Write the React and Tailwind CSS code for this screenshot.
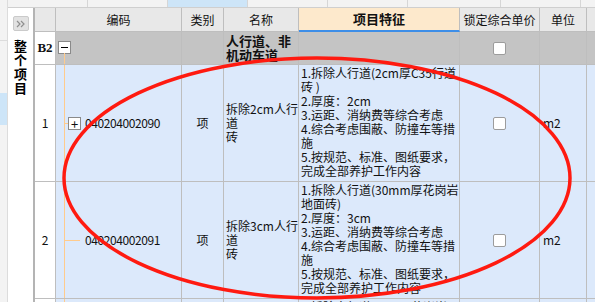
const B = 'border-[#bebebe]'
const BLUE = 'bg-[#dce9fb]'

const rows = [
  {
    n: '1',
    code: '040204002090',
    plus: true,
    name: ['拆除2cm人行', '道', '砖'],
    feat: [
      '1.拆除人行道(2cm厚C35行道',
      '砖 )',
      '2.厚度：2cm',
      '3.运距、消纳费等综合考虑',
      '4.综合考虑围蔽、防撞车等措',
      '施',
      '5.按规范、标准、图纸要求，',
      '完成全部养护工作内容',
    ],
  },
  {
    n: '2',
    code: '040204002091',
    plus: false,
    name: ['拆除3cm人行', '道', '砖'],
    feat: [
      '1.拆除人行道(30mm厚花岗岩',
      '地面砖)',
      '2.厚度：3cm',
      '3.运距、消纳费等综合考虑',
      '4.综合考虑围蔽、防撞车等措',
      '施',
      '5.按规范、标准、图纸要求，',
      '完成全部养护工作内容',
    ],
  },
]

function Check() {
  return <div className="w-[13px] h-[13px] bg-white border border-[#9c9c9c] rounded-[2px]" />
}

function Head({ children, className = '' }) {
  return (
    <div className={`border-r border-b ${B} bg-[#e8e8e8] flex items-center justify-center ${className}`}>
      {children}
    </div>
  )
}

function Row({ r }) {
  const cell = `border-r border-b ${B} ${BLUE}`
  return (
    <>
      <div className={`border-r border-b ${B} bg-white flex items-center justify-center`}>{r.n}</div>
      <div className={`${cell} relative flex items-center`}>
        {/* tree connector */}
        <div className="absolute left-[8px] top-0 bottom-0 w-px bg-[#ffcb8c]" />
        <div className={`absolute left-[8px] top-1/2 h-px bg-[#ffcb8c] ${r.plus ? 'w-[4px]' : 'w-[16px]'}`} />
        <div className="w-[12px] shrink-0" />
        {r.plus ? (
          <div className="relative w-[13px] h-[13px] bg-white border border-[#8a8a8a] flex items-center justify-center text-[13px] leading-none">
            +
          </div>
        ) : (
          <div className="w-[13px] shrink-0" />
        )}
        <span className="ml-[4px] tracking-[-0.4px]">{r.code}</span>
      </div>
      <div className={`${cell} flex items-center justify-center`}>项</div>
      <div className={`${cell} flex items-center pl-[2px] leading-[14px]`}>
        <div>
          {r.name.map((t, i) => (
            <div key={i}>{t}</div>
          ))}
        </div>
      </div>
      <div className={`${cell} pl-[2px] pt-[1px] leading-[14px] whitespace-nowrap overflow-hidden`}>
        {r.feat.map((t, i) => (
          <div key={i}>{t}</div>
        ))}
      </div>
      <div className={`${cell} flex items-center justify-center`}>
        <Check />
      </div>
      <div className={`${cell} flex items-center pl-[3px]`}>m2</div>
      <div className={`border-b ${B} ${BLUE}`} />
    </>
  )
}

export default function App() {
  return (
    <div className="relative w-[595px] h-[302px] overflow-hidden flex bg-white text-[12px] text-[#111] font-['Noto_Sans_CJK_SC',sans-serif]">
      {/* left strip */}
      <div className="w-[8px] shrink-0 bg-[#f3f3f3] border-r border-[#dcdcdc] flex flex-col">
        <div className="h-[41px] border-b border-[#dcdcdc]" />
        <div className="h-[52px]" />
        <div className="h-[32px] bg-[#cde5f8]" />
      </div>

      <div className="flex-1 flex flex-col">
        {/* top strip */}
        <div className="h-[8px] shrink-0 flex bg-[#f3f3f3] border-b border-[#cfcfcf]">
          <div className="w-[80px] border-r border-[#d6d6d6]" />
          <div className="w-[80px] border-r border-[#d6d6d6]" />
          <div className="w-[80px] border-r border-[#d6d6d6] bg-[#cde5f8]" />
          <div className="w-[80px] border-r border-[#d6d6d6]" />
          <div className="w-[80px] border-r border-[#d6d6d6]" />
          <div className="w-[93px] border-r border-[#d6d6d6]" />
          <div className="w-[80px] border-r border-[#d6d6d6]" />
          <div className="flex-1" />
        </div>

        <div className="flex-1 flex">
          {/* side panel */}
          <div className="w-[27px] shrink-0 bg-white border-r-2 border-[#b4b4b4] flex flex-col items-center pt-[8px]">
            <div className="w-[16px] h-[15px] rounded-[2px] bg-[#e2e2e2] border border-[#cacaca] flex items-center justify-center">
              <svg width="10" height="8" viewBox="0 0 10 8">
                <polyline points="1,1 4,4 1,7" fill="none" stroke="#8f8f8f" strokeWidth="1.2" />
                <polyline points="5,1 8,4 5,7" fill="none" stroke="#8f8f8f" strokeWidth="1.2" />
              </svg>
            </div>
            <div className="mt-[8px] text-[13px] font-bold text-black flex flex-col items-center">
              <span className="h-[14px] leading-[14px]">整</span>
              <span className="h-[14px] leading-[14px]">个</span>
              <span className="h-[14px] leading-[14px]">项</span>
              <span className="h-[14px] leading-[14px]">目</span>
            </div>
          </div>

          {/* grid */}
          <div className="flex-1 grid grid-cols-[21px_126px_42px_75px_161px_80px_47px_1fr] grid-rows-[24px_33px_117px_117px_1fr]">
            <Head />
            <Head>编码</Head>
            <Head>类别</Head>
            <Head>名称</Head>
            <div className={`border-r ${B} border-b-2 border-b-[#3d8ee8] bg-[#fde9cc] flex items-center justify-center font-bold text-[13px]`}>
              项目特征
            </div>
            <Head>锁定综合单价</Head>
            <Head>单位</Head>
            <div className={`border-b ${B} bg-[#e8e8e8]`} />

            {/* B2 row */}
            <div className={`border-r border-b ${B} bg-white flex items-center justify-center font-['Liberation_Serif',serif] font-bold text-[13px]`}>
              B2
            </div>
            <div className={`relative border-r border-b ${B} bg-[#c4c4c4]`}>
              <div className="absolute left-[8px] top-[21px] bottom-0 w-px bg-[#ffcb8c]" />
              <div className="ml-[2px] mt-[9px] w-[13px] h-[13px] bg-white border border-[#8a8a8a] flex items-center justify-center">
                <div className="w-[7px] h-px bg-black" />
              </div>
            </div>
            <div className={`border-r border-b ${B} bg-[#c4c4c4]`} />
            <div className={`border-r border-b ${B} bg-[#c4c4c4] pl-[2px] pt-[2px] leading-[14px] font-bold text-[13px]`}>
              <div>人行道、非</div>
              <div>机动车道</div>
            </div>
            <div className={`border-r border-b ${B} bg-[#c4c4c4]`} />
            <div className={`border-r border-b ${B} bg-[#c4c4c4] flex items-center justify-center`}>
              <Check />
            </div>
            <div className={`border-r border-b ${B} bg-[#c4c4c4]`} />
            <div className={`border-b ${B} bg-[#c4c4c4]`} />

            {rows.map((r) => (
              <Row key={r.n} r={r} />
            ))}

            {/* partially visible next row */}
            <div className={`border-r ${B} bg-white`} />
            <div className={`relative border-r ${B} ${BLUE}`}>
              <div className="absolute left-[8px] top-0 bottom-0 w-px bg-[#ffcb8c]" />
            </div>
            <div className={`border-r ${B} ${BLUE}`} />
            <div className={`border-r ${B} ${BLUE}`} />
            <div className={`border-r ${B} ${BLUE} pl-[2px] pt-[1px] leading-[14px] whitespace-nowrap overflow-hidden`}>
              1.拆除人行道(4cm厚花岗岩
            </div>
            <div className={`border-r ${B} ${BLUE}`} />
            <div className={`border-r ${B} ${BLUE}`} />
            <div className={BLUE} />
          </div>
        </div>
      </div>

      {/* red annotation ellipse */}
      <svg className="absolute inset-0 pointer-events-none" width="595" height="302" viewBox="0 0 595 302">
        <ellipse cx="317" cy="178" rx="253" ry="120" fill="none" stroke="#ff1a10" strokeWidth="3.5" />
      </svg>
    </div>
  )
}
